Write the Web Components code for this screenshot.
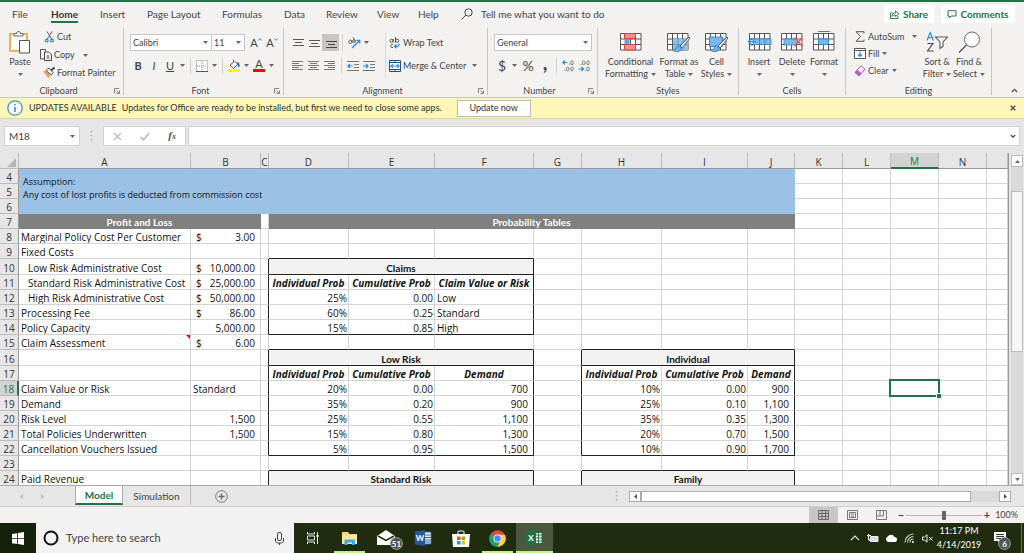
<!DOCTYPE html>
<html lang="en">
<head>
<meta charset="utf-8">
<title>Model - Excel</title>
<style>
html, body { margin: 0; height: 100%; }
body {
  --ui: "Lato", "Open Sans", sans-serif;
  --cell: "Open Sans", "Noto Sans", sans-serif;
  --green: #217346;
  --ink: #444;
  --line: #d4d4d4;
  font: 9px/12px var(--ui);
  color: var(--ink);
  overflow: hidden;
}
</style>
</head>
<body>
<excel-window></excel-window>
<script>
const base = `
*, *::before, *::after { box-sizing: border-box; }
button { appearance: none; border: 0; background: none; margin: 0; padding: 0; font: inherit; color: inherit; white-space: nowrap; cursor: pointer; }
select, input { font: inherit; color: inherit; margin: 0; border-radius: 0; outline: 0; }
a { color: inherit; text-decoration: none; }
`;

function define(name, css, html, setup) {
  const template = document.createElement('template');
  template.innerHTML = `<style>${base}${css}</style>${html}`;
  customElements.define(name, class extends HTMLElement {
    constructor() {
      super();
      this.attachShadow({ mode: 'open' }).append(template.content.cloneNode(true));
    }
    connectedCallback() { if (setup) setup(this, this.shadowRoot); }
  });
}

/* name: [width, height, markup] */
const grid = (x, y, w, h) => `<path fill="#fff" stroke="#555" d="M${x} ${y}h${w}v${h}h-${w}z M${x} ${y + 5.5}h${w}M${x} ${y + 11}h${w}M${x + 5} ${y}v${h}M${x + 10} ${y}v${h}M${x + 15} ${y}v${h}"/>`;
const brush = `<path d="M22 6l-9 9 2 2 8-10z" fill="#fff" stroke="#444" stroke-width=".9"/><path d="M12 14.5c-3 0-3 4-6 5 3 2 8 1.500 8.500-2.500z" fill="#6ab0e4" stroke="#1f6fb2" stroke-width=".7"/>`;
const icons = {
  drop: [5, 3, '<path fill="#666" d="M0 0h5L2.500 3z"/>'],
  search: [12, 12, '<circle cx="7.500" cy="4.500" r="3.700" fill="none" stroke="#444"/><path d="M5 7L.5 11.500" stroke="#444"/>'],
  share: [10, 9, '<path d="M3 3H.5v5.500h7.500V6M2 6.500C2 4 3.500 3 5.500 3V.8L9 3.800 5.500 6.500V5C4 5 3 5.500 2 6.500z" fill="none" stroke="#217346" stroke-width=".9"/>'],
  comment: [10, 9, '<path d="M1 .7h8v5.300H4L2.200 8V6H1z" fill="none" stroke="#217346"/>'],
  paste: [22, 23, '<path d="M1 3h17v17H1z" fill="#fff" stroke="#f0b35c" stroke-width="2"/><path d="M5 5V2.500h2.500a2 2 0 0 1 4 0H14V5z" fill="#fff" stroke="#666"/><path d="M10.500 9.500h10v12.500h-10z" fill="#fff" stroke="#555"/>'],
  cut: [12, 12, '<g transform="translate(2 0)"><path d="M2 .5l5 8M7 .5l-5 8" stroke="#555" fill="none"/><circle cx="1.700" cy="9.500" r="1.400" fill="none" stroke="#2b88d8" stroke-width="1.200"/><circle cx="7" cy="9.500" r="1.400" fill="none" stroke="#2b88d8" stroke-width="1.200"/></g>'],
  copy: [12, 12, '<path d="M4 10H.5V.5h5v2" fill="none" stroke="#555"/><path d="M4.500 3h4l3 2.500v6h-7z" fill="#fff" stroke="#444"/><path d="M6.500 7h3M6.500 9h3" stroke="#444"/>'],
  painter: [12, 12, '<path d="M0 4.500L4 3l4 4-2.500 4.500z" fill="#f5a35c"/><path d="M3 3.500L6 1l4 4.500L8.500 8z" fill="#fff" stroke="#555"/><path d="M8 3.500L11.500.5" stroke="#444" stroke-width="2"/>'],
  launcher: [6, 6, '<path d="M.5 5V.5H5M2.500 2.500L5 5M5.500 2.500v3h-3" fill="none" stroke="#777" stroke-width=".9"/>'],
  borders: [12, 12, '<path d="M.5.5h11v11H.5zM6 1v10M1 6h10" fill="#fff" stroke="#888" stroke-dasharray="1 1"/><path d="M0 11.500h12" stroke="#555"/>'],
  fill: [12, 13, '<path d="M5.500.8v2.500L2 6l3.500 3.500L10 5 6.500 2.500" fill="#fff" stroke="#555"/><path d="M9.500 3.500c1.500 1 1.500 3 1 4.500" stroke="#1f6fb2" stroke-width="1.600" fill="none"/><path d="M0 10h12v3H0z" fill="#ff0"/>'],
  caretup: [4, 3, '<path d="M.3 2.500L2 .7l1.700 1.800" fill="none" stroke="#2b88d8"/>'],
  caretdown: [4, 3, '<path d="M.3.5L2 2.300 3.700.5" fill="none" stroke="#2b88d8"/>'],
  top: [12, 12, '<path d="M1 2.500h11M3 5.500h7M1 8.500h11" stroke="#555"/>'],
  middle: [12, 12, '<path d="M1 3.500h11M3 6.500h7M1 9.500h11" stroke="#555"/>'],
  bottom: [12, 12, '<path d="M1 4.500h11M3 7.500h7M1 10.500h11" stroke="#444"/>'],
  left: [12, 12, '<path d="M0 1.500h11M0 3.500h7M0 5.500h11M0 7.500h7M0 9.500h11" stroke="#777"/>'],
  center: [12, 12, '<path d="M0 1.500h11M2 3.500h7M0 5.500h11M2 7.500h7M0 9.500h11" stroke="#777"/>'],
  right: [12, 12, '<path d="M0 1.500h11M4 3.500h7M0 5.500h11M4 7.500h7M0 9.500h11" stroke="#777"/>'],
  orient: [13, 12, '<path d="M4 11l7.500-7.500M8.500 3.300l3.200 0v3.200" stroke="#2b88d8" stroke-width="1.300" fill="none"/><g fill="none" stroke="#666"><circle cx="2.300" cy="5" r="1.600"/><path d="M2.500 2.500l2 3M5 .3l3 5"/><circle cx="6" cy="4" r="1.300"/></g>'],
  outdent: [12, 12, '<path d="M0 1.500h12M7 4.500h5M7 7.500h5M0 10.500h12" stroke="#777"/><path d="M6 6H1M3 4L1 6l2 2" stroke="#2b88d8" stroke-width="1.200" fill="none"/>'],
  indent: [12, 12, '<path d="M0 1.500h12M7 4.500h5M7 7.500h5M0 10.500h12" stroke="#777"/><path d="M0 6h5M3 4l2 2-2 2" stroke="#2b88d8" stroke-width="1.200" fill="none"/>'],
  wrap: [11, 12, '<g fill="none" stroke="#555"><circle cx="2.500" cy="3.700" r="1.500"/><path d="M4.300 2v3.500M6.500 0v5.500"/><circle cx="8.200" cy="3.700" r="1.600"/><path d="M4 7.500c-3-1-3 4 0 3"/></g><path d="M10 6.500c.5 3-2 3.200-4.500 3M7.500 7.500l-2 2 2 1.800" fill="none" stroke="#2b88d8" stroke-width="1.200"/>'],
  merge: [12, 12, '<path d="M.5.5h11v11H.5z" fill="#fff" stroke="#1f4f80"/><path d="M.5 2.500h11M.5 9.500h11M6 .5v2M6 9.500v2" stroke="#1f4f80"/><path d="M2 6h8M3.800 4.200L2 6l1.800 1.800M8.200 4.200L10 6 8.200 7.800" stroke="#2b88d8" stroke-width="1.200" fill="none"/>'],
  moredec: [12, 12, '<path d="M5.500 2.500H.8M2.800.5l-2 2 2 2" stroke="#2b88d8" fill="none" stroke-width="1.200"/><g fill="none" stroke="#777" stroke-width=".9"><ellipse cx="10" cy="2.800" rx="1.300" ry="2"/><ellipse cx="5.700" cy="9" rx="1.300" ry="2"/><ellipse cx="10" cy="9" rx="1.300" ry="2"/></g><path d="M2.500 10.500h1M7 4.200h1" stroke="#777"/>'],
  lessdec: [12, 12, '<path d="M.5 9h5M3.500 7l2 2-2 2" stroke="#2b88d8" fill="none" stroke-width="1.200"/><g fill="none" stroke="#777" stroke-width=".9"><ellipse cx="5.700" cy="2.800" rx="1.300" ry="2"/><ellipse cx="10" cy="2.800" rx="1.300" ry="2"/><ellipse cx="10" cy="9" rx="1.300" ry="2"/></g><path d="M2.500 4.500h1M7 10.500h1" stroke="#777"/>'],
  conditional: [22, 20, grid(.5, 2.5, 20.5, 16.500) + '<path d="M4.500 2.500h11v5h-11zM4.500 13.500h11V19h-11z" fill="#ff8d8d" stroke="#e04040"/><path d="M4.500 8h5v5h-5z" fill="#57a6e0"/>'],
  fmttable: [24, 22, grid(.5, 2.5, 20.500, 16.500) + '<path d="M6 8h15v11H6z" fill="#8ec3ee"/><path d="M6 13.500h15M11 8v11M16 8v11" stroke="#5a9fd4"/>' + brush],
  cellstyles: [24, 22, grid(.5, 2.5, 20.500, 16.500) + '<path d="M4.500 6h13v9.500h-13z" fill="#79b8ee" stroke="#3f88c5"/>' + brush],
  insert: [25, 20, grid(2.5, 2.5, 20.500, 16.500) + '<path d="M6 8h18v5.500H6z" fill="#7db9ec" stroke="#3b87c8" stroke-width=".8"/><path d="M12.500 8.500v5M18 8.500v5" stroke="#3b87c8"/><path d="M9 10.700H1.500M5.500 6.700l-4 4 4 4" fill="none" stroke="#2b88d8" stroke-width="1.300"/>'],
  delete: [23, 20, grid(.5, 2.5, 20.500, 16.500) + '<path d="M3 8h11l3 3-3 3H3z" fill="#7db9ec" stroke="#3b87c8" stroke-width=".8"/><path d="M13.500 6.500l8 9M21.500 6.500l-8 9" stroke="#f05a50" stroke-width="1.500"/>'],
  format: [22, 20, '<path d="M5 .5h12" stroke="#2b88d8"/>' + grid(.5, 2.5, 20.500, 16.5) + '<path d="M5.500 8h10v5.500h-10z" fill="#79b8ee" stroke="#3b87c8"/>'],
  sum: [12, 11, '<path d="M10 2.500V.7H2L6.500 5.500 2 10.300h8V8.500" fill="none" stroke="#555"/>'],
  filldown: [12, 11, '<path d="M.5.5h11v10H.5z" fill="#fff" stroke="#555"/><path d="M.5 2.500h11" stroke="#555"/><path d="M6 3.500v5M4 6.500l2 2 2-2" stroke="#2b88d8" fill="none" stroke-width="1.200"/>'],
  clear: [12, 12, '<path d="M1 7.500L7 .8l4 3.400-6 6.700z" fill="#fff" stroke="#a54ab3"/><path d="M1 7.500l2.500-2.700 4 3.400L5 11z" fill="#b75fc4"/>'],
  sort: [22, 22, '<g fill="none" stroke-width="1.100"><path d="M1 9.500L4.200 1.500l3.200 8M2.200 6.700h4" stroke="#2b88d8"/><path d="M1.500 12.500h5.500L1.500 20h6" stroke="#444"/><path d="M9.500 6h12l-4.500 5v4.500l-3 2V11z" stroke="#555" fill="#fff"/></g>'],
  find: [23, 22, '<circle cx="14" cy="8.500" r="7.500" fill="#fff" stroke="#666"/><path d="M8.500 14L1 21.500" stroke="#555" stroke-width="1.300"/>'],
  collapse: [7, 5, '<path d="M.8 4L3.500 1.300 6.200 4" fill="none" stroke="#555" stroke-width="1.300"/>'],
  info: [16, 16, '<circle cx="8" cy="8" r="7.200" fill="#fff" stroke="#3b98d0" stroke-width="1.300"/><path d="M8 7v5M8 4v1.500" stroke="#2b88d8" stroke-width="1.500"/>'],
  close: [6, 6, '<path d="M.7.700l4.600 4.600M5.300.700L.7 5.300" stroke="#555" stroke-width="1.500"/>'],
  dots: [3, 10, '<path d="M1.500 0v10" stroke="#aaa" stroke-width="1.500" stroke-dasharray="1.500 2.500"/>'],
  cancel: [9, 9, '<path d="M1 1l7 7M8 1L1 8" stroke="#bbb" stroke-width="1.300"/>'],
  check: [10, 9, '<path d="M1 5l2.500 3L9 1" stroke="#bbb" stroke-width="1.600" fill="none"/>'],
  expand: [6, 5, '<path d="M.8 1L3 3.300 5.200 1" fill="none" stroke="#555" stroke-width="1.300"/>'],
  corner: [9, 9, '<path d="M9 0v9H0z" fill="#b5b5b5"/>'],
  triL: [3, 5, '<path d="M3 0v5L0 2.500z" fill="currentColor"/>'],
  triR: [3, 5, '<path d="M0 0v5l3-2.500z" fill="currentColor"/>'],
  triU: [5, 3, '<path d="M0 3h5L2.500 0z" fill="currentColor"/>'],
  triD: [5, 3, '<path d="M0 0h5L2.500 3z" fill="currentColor"/>'],
  plus: [13, 13, '<circle cx="6.500" cy="6.500" r="5.800" fill="none" stroke="#777"/><path d="M3.500 6.500h6M6.500 3.500v6" stroke="#666" stroke-width="1.300"/>'],
  viewnormal: [11, 10, '<path d="M.5.5h10v9H.5zM.5 3.500h10M.5 6.500h10M4 .5v9M7.500.5v9" fill="none" stroke="#666"/>'],
  viewpage: [11, 10, '<path d="M.5.5h10v9H.5zM2.500 2.500h6v5h-6z" fill="none" stroke="#777"/><path d="M4 4h3M4 6h3" stroke="#777"/>'],
  viewbreak: [11, 10, '<path d="M.5.5h10v9H.5zM4 .5v5.500M7.500.5V6M.5 6H7.500" fill="none" stroke="#777"/>'],
  windows: [12, 13, '<path d="M0 2l5.200-.8v5H0zM6 1l6-1v6.200H6zM0 7h5.200v5L0 11.200zM6 7h6v6l-6-1z" fill="#fff"/>'],
  ring: [16, 16, '<circle cx="8" cy="8" r="6.500" fill="none" stroke="#111" stroke-width="2"/>'],
  mic: [9, 13, '<rect x="2.500" y=".5" width="4" height="8" rx="1.500" fill="none" stroke="#444"/><path d="M.5 6v3.500l2 1.500h4l2-1.500V6M4.500 11v2" fill="none" stroke="#444"/>'],
  taskview: [12, 12, '<path d="M.5 0v2h7V0M.5 12v-2h7v2M.5 4h7v4h-7zM10.500 0v12" fill="none" stroke="#e8e8e8"/><path d="M9.500 4h2" stroke="#fff" stroke-width="2"/>'],
  explorer: [17, 14, '<path d="M1 1h6l1.500 2H16v10H1z" fill="#f7d774"/><path d="M1 4h15v9H1z" fill="#fce79c"/><path d="M3.500 14V8.500h10.500V14h-3v-2.500H6.500V14z" fill="#3fa9e0"/>'],
  mail: [19, 16, '<path d="M0 6l9-6 9 6v9H0z" fill="#fff"/><path d="M1 6l8 4.500L17 6" fill="none" stroke="#1e2a0e" stroke-width="1.500"/>'],
  word: [17, 16, '<path d="M8 2h8v12H8z" fill="#fff" stroke="#2b579a"/><path d="M9 5h6M9 7.500h6M9 10h6M9 12h6" stroke="#2b579a"/><path d="M0 1.500L10 0v16L0 14.500z" fill="#2b579a"/>'],
  store: [18, 17, '<path d="M6 5V1.800C6 .5 12 .5 12 1.800V5" fill="none" stroke="#ddd" stroke-width="1.200"/><path d="M0 4h18l-1 13H1z" fill="#fff"/><path d="M5 6.500h3.500V10H5z" fill="#f25022"/><path d="M9.500 6.500H13V10H9.500z" fill="#7fba00"/><path d="M5 11h3.500v3.500H5z" fill="#00a4ef"/><path d="M9.500 11H13v3.500H9.500z" fill="#ffb900"/>'],
  chrome: [17, 17, '<circle cx="8.500" cy="8.500" r="8.300" fill="#dd4b3e"/><path d="M8.500 8.500L1.300 4.400A8.300 8.300 0 0 0 8.500 16.800l3.500-6.300z" fill="#1da462"/><path d="M8.500 8.500h4l-4 8.300A8.300 8.300 0 0 0 15.900 4.800H8.500z" fill="#ffcd46"/><circle cx="8.500" cy="8.500" r="4" fill="#fff"/><circle cx="8.500" cy="8.500" r="3.200" fill="#4c8bf5"/>'],
  excel: [17, 16, '<path d="M8 2.500h8v11H8z" fill="#fff" stroke="#217346"/><path d="M9 5h7M9 8h7M9 11h7M12.500 3v10" stroke="#217346"/><path d="M0 1.500L10 0v16L0 14.500z" fill="#217346"/>'],
  trayup: [10, 6, '<path d="M1 5l4-4 4 4" fill="none" stroke="#e8e8e8" stroke-width="1.100"/>'],
  battery: [12, 9, '<path d="M3.500 2.500h7.500v5H3.500z" fill="#ddd" stroke="#eee"/><path d="M0 1.500h4M1.500 0v4.500c0 1.500 1 2 2 2" fill="none" stroke="#fff" stroke-width="1.200"/>'],
  cloud: [13, 8, '<path d="M3 8a3 3 0 0 1-.3-5.500A4 4 0 0 1 9.500 3 2.600 2.600 0 0 1 10.500 8z" fill="#fff"/>'],
  wifi: [11, 10, '<path d="M1 9.500A8.500 8.500 0 0 1 9.500 1M3.500 9.500a6 6 0 0 1 6-6M6 9.500A3.500 3.500 0 0 1 9.500 6" fill="none" stroke="#c8cdc0" stroke-width="1.100"/><circle cx="9" cy="9" r="1" fill="#fff"/>'],
  mute: [11, 9, '<path d="M.5 3h2L5 .8v7.400L2.500 6h-2z" fill="none" stroke="#eee"/><path d="M7 3l3.500 3.500M10.500 3L7 6.500" stroke="#eee"/>'],
  notes: [13, 12, '<path d="M0 0h12v9H6l-2 3V9H0z" fill="#fff"/><path d="M2 2.500h8M2 4.500h8M2 6.500h5" stroke="#33402a"/>']
};

customElements.define('ui-icon', class extends HTMLElement {
  connectedCallback() {
    if (this.shadowRoot) return;
    const [w, h, art] = icons[this.getAttribute('name')];
    this.attachShadow({ mode: 'open' }).innerHTML =
      `<style>:host{display:block;flex:none;width:${w}px;height:${h}px}svg{display:block}</style>` +
      `<svg width="${w}" height="${h}" viewBox="0 0 ${w} ${h}" aria-hidden="true">${art}</svg>`;
  }
});

define('ribbon-tabs', `
:host { display: flex; flex: none; align-items: center; height: 26px; padding: 0 9px 0 12px; border-top: 2px solid var(--green); background: #f3f2f1; font-size: 10px; }
nav { display: grid; grid-template-columns: 39px 49px 47px 75px 62px 42px 51px 41px 43px auto; align-items: center; height: 24px; margin-right: auto; white-space: nowrap; }
nav a { justify-self: start; line-height: 14px; border-bottom: 2px solid transparent; padding-top: 2px; }
nav a.on { font-weight: 700; border-color: var(--green); color: #333; }
.tell { display: flex; align-items: center; gap: 8px; }
.act { display: flex; align-items: center; justify-content: center; gap: 3px; width: 50px; height: 18px; background: #fff; border-radius: 2px; color: var(--green); font-weight: 700; }
.act + .act { width: 74px; margin-left: 7px; }
`, `
<nav>
  <a href="#file">File</a><a href="#home" class="on">Home</a><a href="#insert">Insert</a><a href="#layout">Page Layout</a><a href="#formulas">Formulas</a><a href="#data">Data</a><a href="#review">Review</a><a href="#view">View</a><a href="#help">Help</a>
  <button class="tell"><ui-icon name="search"></ui-icon>Tell me what you want to do</button>
</nav>
<button class="act"><ui-icon name="share"></ui-icon>Share</button>
<button class="act"><ui-icon name="comment"></ui-icon>Comments</button>
`);

define('ribbon-group', `
:host { display: flex; flex: none; flex-direction: column; margin: 2px 0; border-right: 1px solid #c6c6c6; box-sizing: border-box; }
.body { display: flex; flex: 1; }
.foot { display: flex; align-items: center; line-height: 8px; height: 8px; padding-right: 3px; }
.foot span { flex: 1; text-align: center; padding-left: 3px; }
button[hidden] { display: none; }
`, `
<div class="body"><slot></slot></div>
<div class="foot"><span></span><button aria-label="More options"><ui-icon name="launcher"></ui-icon></button></div>
`, (host, root) => {
  root.querySelector('span').textContent = host.getAttribute('label');
  root.querySelector('button').hidden = !host.hasAttribute('launcher');
});

define('office-ribbon', `
:host { display: flex; flex: none; height: 72px; background: #f3f2f1; border-bottom: 1px solid #c8c6c4; position: relative; }
.rows { display: flex; flex-direction: column; gap: 6px; padding: 6px 0 0 6px; }
.row { display: flex; align-items: center; height: 17px; }
.sep { width: 1px; height: 16px; margin: 0 3px; background: #d2d0ce; }
.tall { width: 1px; height: 46px; margin: 4px 0 0 8px; background: #dcdad8; }
select { appearance: none; height: 17px; border: 1px solid #c6c6c6; padding: 0 2px; background: #fff url("data:image/svg+xml,%3Csvg xmlns='http://www.w3.org/2000/svg' width='5' height='3'%3E%3Cpath fill='%23666' d='M0 0h5L2.500 3z'/%3E%3C/svg%3E") no-repeat right 3px center; }
select + select { border-left: 0; }
.row button { display: flex; align-items: center; justify-content: center; width: 16px; height: 17px; }
.row .arrow { width: 9px; }
.row .on { width: 17px; background: #c8c6c4; }
.glyph { font-size: 11px; }
.money { font-size: 14px; }
.row .comma { font-size: 20px; padding-bottom: 8px; }
.row .text { width: auto; gap: 2px; justify-content: flex-start; }
.list { display: flex; flex-direction: column; }
.list button { display: flex; align-items: center; height: 18px; }
.list button > ui-icon:first-child { margin-right: 2px; }
.list button > ui-icon:last-child { margin-left: 3px; }
.list .far > ui-icon:last-child { margin-left: 8px; }
.tight button { height: 17px; }
.big { display: flex; flex-direction: column; align-items: center; padding-top: 3px; }
.pic { display: flex; align-items: flex-start; height: 22px; margin-bottom: 3px; }
.big .line { display: flex; align-items: center; justify-content: center; gap: 3px; height: 12px; }
.tools { display: grid; padding-left: 3px; }
.row .colour { flex-direction: column; }
.colour i { display: block; width: 12px; height: 3px; background: #f00; }
.colour span { font-size: 11px; line-height: 10px; }
.fold { position: absolute; right: 6px; bottom: 4px; }
`, `
<ribbon-group label="Clipboard" launcher style="width:124px">
  <button class="big" style="width:40px"><span class="pic"><ui-icon name="paste"></ui-icon></span><span>Paste</span><span class="line"><ui-icon name="drop"></ui-icon></span></button>
  <div class="list">
    <button><ui-icon name="cut"></ui-icon>Cut</button>
    <button class="far"><ui-icon name="copy"></ui-icon>Copy<ui-icon name="drop"></ui-icon></button>
    <button><ui-icon name="painter"></ui-icon>Format Painter</button>
  </div>
</ribbon-group>
<ribbon-group label="Font" launcher style="width:160px">
  <div class="rows">
    <div class="row"><select aria-label="Font" style="width:82px"><option>Calibri</option></select><select aria-label="Size" style="width:33px"><option>11</option></select>
      <button class="glyph" style="margin-left:3px" aria-label="Grow">A<ui-icon name="caretup" style="margin-bottom:6px"></ui-icon></button><button class="glyph" aria-label="Shrink">A<ui-icon name="caretdown" style="margin-bottom:6px"></ui-icon></button></div>
    <div class="row glyph"><button><b>B</b></button><button><i>I</i></button><button><u>U</u></button><button class="arrow" aria-label="Underline styles"><ui-icon name="drop"></ui-icon></button><span class="sep"></span>
      <button aria-label="Borders"><ui-icon name="borders"></ui-icon></button><button class="arrow" aria-label="Border styles"><ui-icon name="drop"></ui-icon></button><span class="sep"></span>
      <button aria-label="Fill"><ui-icon name="fill"></ui-icon></button><button class="arrow" aria-label="Fill colours"><ui-icon name="drop"></ui-icon></button><button class="colour"><span>A</span><i></i></button><button class="arrow" aria-label="Font colours"><ui-icon name="drop"></ui-icon></button></div>
  </div>
</ribbon-group>
<ribbon-group label="Alignment" launcher style="width:204px">
  <div class="rows">
    <div class="row"><button aria-label="Top"><ui-icon name="top"></ui-icon></button><button aria-label="Middle"><ui-icon name="middle"></ui-icon></button><button class="on" aria-label="Bottom"><ui-icon name="bottom"></ui-icon></button><span class="sep"></span>
      <button aria-label="Orientation"><ui-icon name="orient"></ui-icon></button><button class="arrow" aria-label="Orientations"><ui-icon name="drop"></ui-icon></button></div>
    <div class="row"><button aria-label="Left"><ui-icon name="left"></ui-icon></button><button aria-label="Centre"><ui-icon name="center"></ui-icon></button><button aria-label="Right"><ui-icon name="right"></ui-icon></button><span class="sep"></span>
      <button aria-label="Outdent"><ui-icon name="outdent"></ui-icon></button><button aria-label="Indent"><ui-icon name="indent"></ui-icon></button></div>
  </div>
  <span class="tall"></span>
  <div class="rows" style="padding-left:3px">
    <div class="row"><button class="text"><ui-icon name="wrap" style="margin-right:1px"></ui-icon>Wrap Text</button></div>
    <div class="row"><button class="text"><ui-icon name="merge"></ui-icon>Merge &amp; Center</button><button class="arrow" style="margin-left:4px" aria-label="Merge options"><ui-icon name="drop"></ui-icon></button></div>
  </div>
</ribbon-group>
<ribbon-group label="Number" launcher style="width:110px">
  <div class="rows">
    <div class="row"><select aria-label="Number format" style="width:98px"><option>General</option></select></div>
    <div class="row money"><button>$</button><button class="arrow" aria-label="Currencies"><ui-icon name="drop"></ui-icon></button><button style="width:18px">%</button><button class="comma"><b>,</b></button><span class="sep"></span><button aria-label="More decimals"><ui-icon name="moredec"></ui-icon></button><button aria-label="Fewer decimals"><ui-icon name="lessdec"></ui-icon></button></div>
  </div>
</ribbon-group>
<ribbon-group label="Styles" style="width:141px">
  <div class="tools" style="grid-template-columns:59px 38px 37px">
    <button class="big"><span class="pic"><ui-icon name="conditional"></ui-icon></span><span>Conditional</span><span class="line">Formatting<ui-icon name="drop"></ui-icon></span></button>
    <button class="big"><span class="pic"><ui-icon name="fmttable"></ui-icon></span><span>Format as</span><span class="line">Table<ui-icon name="drop"></ui-icon></span></button>
    <button class="big"><span class="pic"><ui-icon name="cellstyles"></ui-icon></span><span>Cell</span><span class="line">Styles<ui-icon name="drop"></ui-icon></span></button>
  </div>
</ribbon-group>
<ribbon-group label="Cells" style="width:107px">
  <div class="tools" style="grid-template-columns:34px 32px 32px">
    <button class="big"><span class="pic"><ui-icon name="insert"></ui-icon></span><span>Insert</span><span class="line"><ui-icon name="drop"></ui-icon></span></button>
    <button class="big"><span class="pic"><ui-icon name="delete"></ui-icon></span><span>Delete</span><span class="line"><ui-icon name="drop"></ui-icon></span></button>
    <button class="big"><span class="pic"><ui-icon name="format"></ui-icon></span><span>Format</span><span class="line"><ui-icon name="drop"></ui-icon></span></button>
  </div>
</ribbon-group>
<ribbon-group label="Editing" style="width:146px">
  <div class="list tight" style="width:75px;padding-left:8px">
    <button class="far"><ui-icon name="sum"></ui-icon>AutoSum<ui-icon name="drop"></ui-icon></button>
    <button><ui-icon name="filldown"></ui-icon>Fill<ui-icon name="drop"></ui-icon></button>
    <button><ui-icon name="clear"></ui-icon>Clear<ui-icon name="drop"></ui-icon></button>
  </div>
  <div class="tools" style="grid-template-columns:32px 32px;padding:0">
    <button class="big"><span class="pic"><ui-icon name="sort"></ui-icon></span><span>Sort &amp;</span><span class="line">Filter<ui-icon name="drop"></ui-icon></span></button>
    <button class="big"><span class="pic"><ui-icon name="find"></ui-icon></span><span>Find &amp;</span><span class="line">Select<ui-icon name="drop"></ui-icon></span></button>
  </div>
</ribbon-group>
<button class="fold" aria-label="Collapse"><ui-icon name="collapse"></ui-icon></button>
`);

define('message-bar', `
:host { display: flex; flex: none; align-items: center; height: 21px; padding: 0 8px 0 7px; background: #fcf7b6; border-bottom: 1px solid #ded9a0; color: #333; white-space: nowrap; }
b { font-weight: 400; margin: 0 5px 0 6px; }
.now { width: 74px; height: 17px; margin: 0 auto 0 15px; background: #fff; border: 1px solid #bbb; }
`, `
<ui-icon name="info"></ui-icon><b>UPDATES AVAILABLE</b><span>Updates for Office are ready to be installed, but first we need to close some apps.</span>
<button class="now">Update now</button><button aria-label="Close"><ui-icon name="close"></ui-icon></button>
`);

define('formula-bar', `
:host { display: flex; flex: none; align-items: center; height: 34px; padding: 0 4px; background: #e6e6e6; }
.name, .edit, .ctl { height: 20px; border: 1px solid #d0d0d0; background: #fff; }
.name { display: flex; align-items: center; width: 76px; padding-right: 4px; }
.name input { flex: 1; min-width: 0; border: 0; padding: 0 4px; font-size: 10px; background: none; }
.dots { width: 23px; display: flex; justify-content: center; }
.ctl { display: flex; align-items: center; justify-content: space-between; width: 83px; padding: 0 9px; }
.ctl button:last-child { font: italic 700 11px/16px "Liberation Serif", serif; color: #555; }
.ctl small { font-size: 8px; }
.edit { display: flex; align-items: center; flex: 1; margin-left: 2px; padding-right: 3px; }
.edit input { flex: 1; border: 0; background: none; }
`, `
<label class="name"><input aria-label="Name box" value="M18"><ui-icon name="drop"></ui-icon></label>
<span class="dots"><ui-icon name="dots"></ui-icon></span>
<div class="ctl"><button aria-label="Cancel"><ui-icon name="cancel"></ui-icon></button><button aria-label="Enter"><ui-icon name="check"></ui-icon></button><button>f<small>x</small></button></div>
<label class="edit"><input aria-label="Formula"><ui-icon name="expand"></ui-icon></label>
`);

/* Sheet contents: address -> [text, classes, colspan, rowspan] */
const cells = {
  A4: ['', 'note', 10, 3],
  A7: ['Profit and Loss', 'band', 2], D7: ['Probability Tables', 'band', 7],
  A8: ['Marginal Policy Cost Per Customer'], B8: ['$ 3.00', 'acct'],
  A9: ['Fixed Costs'],
  A10: ['Low Risk Administrative Cost', 'in'], B10: ['$ 10,000.00', 'acct'],
  A11: ['Standard Risk Administrative Cost', 'in'], B11: ['$ 25,000.00', 'acct'],
  A12: ['High Risk Administrative Cost', 'in'], B12: ['$ 50,000.00', 'acct'],
  A13: ['Processing Fee'], B13: ['$ 86.00', 'acct'],
  A14: ['Policy Capacity'], B14: ['5,000.00', 'num pad'],
  A15: ['Claim Assessment', 'flag'], B15: ['$ 6.00', 'acct'],
  A18: ['Claim Value or Risk'], B18: ['Standard'], A19: ['Demand'],
  A20: ['Risk Level'], B20: ['1,500', 'num pad'],
  A21: ['Total Policies Underwritten'], B21: ['1,500', 'num pad'],
  A22: ['Cancellation Vouchers Issued'], A24: ['Paid Revenue'],
  D10: ['Claims', 'title', 3], D16: ['Low Risk', 'title', 3], D24: ['Standard Risk', 'title', 3],
  H16: ['Individual', 'title', 3], H24: ['Family', 'title', 3],
  M18: ['', 'sel']
};
const put = (cols, row, values, classes) => values.forEach((v, i) => { cells[cols[i] + row] = [v, classes[i]]; });
const head = ['head', 'head', 'head'], nums = ['num', 'num', 'num pad'];
put('DEF', 11, ['Individual Prob', 'Cumulative Prob', 'Claim Value or Risk'], head);
[['25%', '0.00', 'Low'], ['60%', '0.25', 'Standard'], ['15%', '0.85', 'High']].forEach((v, i) => put('DEF', 12 + i, v, ['num', 'num', '']));
put('DEF', 17, ['Individual Prob', 'Cumulative Prob', 'Demand'], head);
[['20%', '0.00', '700'], ['35%', '0.20', '900'], ['25%', '0.55', '1,100'], ['15%', '0.80', '1,300'], ['5%', '0.95', '1,500']].forEach((v, i) => put('DEF', 18 + i, v, nums));
put('HIJ', 17, ['Individual Prob', 'Cumulative Prob', 'Demand'], head);
[['10%', '0.00', '900'], ['25%', '0.10', '1,100'], ['35%', '0.35', '1,300'], ['20%', '0.70', '1,500'], ['10%', '0.90', '1,700']].forEach((v, i) => put('HIJ', 18 + i, v, nums));

/* Outlined ranges: first row, first column, last row, last column */
const boxes = [[10, 4, 10, 6], [11, 4, 14, 6], [16, 4, 16, 6], [17, 4, 22, 6], [24, 4, 25, 6], [16, 8, 16, 10], [17, 8, 22, 10], [24, 8, 25, 10]];
const letters = 'ABCDEFGHIJKLMNO';

define('sheet-grid', `
:host { display: flex; flex: 1; min-height: 0; background: #e6e6e6; font: 10px/12px var(--cell); color: #111; }
.view { flex: 1; min-width: 0; overflow: hidden; border-right: 1px solid #999; background: #fff; }
table { table-layout: fixed; width: 100%; border-collapse: separate; border-spacing: 0; }
th, td { padding: 0 2px; height: 15px; border: 0 solid var(--line); border-width: 0 1px 1px 0; white-space: nowrap; overflow: hidden; text-align: left; line-height: 12px; vertical-align: bottom; }
thead th { height: 16px; background: #e6e6e6; border-right-color: #bbb; border-bottom-color: #999; }
th { font: 10px/12px var(--cell); color: #333; text-align: center; padding: 0; }
tbody th { background: #e6e6e6; border-right-color: #999; border-bottom-color: #bbb; }
tr.mid > * { height: 16px; }
thead .corner ui-icon { margin: 0 0 1px 7px; }
thead .corner { border-bottom-color: #bbb; }
thead .hot { background: #d2d2d2; color: var(--green); border-bottom: 2px solid var(--green); }
tbody .hot { background: #d2d2d2; color: var(--green); border-right: 2px solid var(--green); }
td.note { background: #9bc2e6; border-color: #9bc2e6; vertical-align: top; padding: 6px 4px; font-size: 9px; line-height: 13px; }
td.band, td.title { font-family: var(--ui); font-weight: 700; text-align: center; }
td.band { background: #808080; border-color: #808080; color: #fff; }
td.title { background: #f2f2f2; }
td.head { font-weight: 700; font-style: italic; text-align: center; padding: 0; }
td.num { text-align: right; padding: 0 1px; }
td.pad { padding-right: 5px; }
td.in { padding-left: 9px; }
td.acct div { display: flex; justify-content: space-between; padding: 0 3px; }
td.flag { position: relative; }
td.flag::after { content: ""; position: absolute; right: 0; top: 0; border: 2px solid #e00; border-left-color: transparent; border-bottom-color: transparent; }
td.rb { border-right-color: #222; }
td.bb { border-bottom-color: #222; }
td.sel { position: relative; overflow: visible; }
td.sel::before { content: ""; position: absolute; inset: -2px; border: 2px solid var(--green); }
td.sel::after { content: ""; position: absolute; right: -3px; bottom: -3px; width: 5px; height: 5px; background: var(--green); border: 1px solid #fff; border-width: 1px 0 0 1px; }
.bar { display: flex; flex-direction: column; width: 15px; padding: 2px 1px 0 2px; }
.bar button { display: flex; align-items: center; justify-content: center; height: 12px; background: #fff; border: 1px solid #bbb; color: #666; }
.track { flex: 1; background: #dadada; padding: 24px 0 121px; }
.thumb { height: 100%; background: #f6f6f6; border: 1px solid #bbb; }
`, `
<div class="view"><table><colgroup></colgroup><thead><tr></tr></thead><tbody></tbody></table></div>
<div class="bar"><button aria-label="Up"><ui-icon name="triU"></ui-icon></button><div class="track"><div class="thumb"></div></div><button aria-label="Down"><ui-icon name="triD"></ui-icon></button></div>
`, (host, root) => {
  const widths = [19, 172, 70, 8, 80, 86, 99, 48, 80, 86, 47, 48, 48, 48, 48, 0];
  root.querySelector('colgroup').innerHTML = widths.map(w => w ? `<col style="width:${w}px">` : '<col>').join('');
  root.querySelector('thead tr').innerHTML = '<th class="corner"><ui-icon name="corner"></ui-icon></th>' +
    [...letters].map(l => `<th class="${l === 'M' ? 'hot' : ''}">${l === 'O' ? '' : l}</th>`).join('');
  let html = '';
  for (let r = 4; r <= 24; r++) {
    html += `<tr class="${r === 10 || r === 16 ? 'mid' : ''}"><th class="${r === 18 ? 'hot' : ''}">${r}</th>`;
    for (let c = 1; c <= 15; c++) {
      if (r > 4 && r < 7 && c <= 10) continue;
      const [text, cls = '', span = 1, rows = 1] = cells[letters[c - 1] + r] || [''];
      const last = c + span - 1;
      const rb = boxes.some(([a, b, x, y]) => r >= a && r <= x && (last === b - 1 || last === y));
      const bb = boxes.some(([a, b, x, y]) => c >= b && c <= y && (r === a - 1 || r === x));
      let body = text;
      if (cls === 'acct') body = '<div>' + text.split(' ').map(t => `<span>${t}</span>`).join('') + '</div>';
      if (cls === 'note') body = 'Assumption:<br>Any cost of lost profits is deducted from commission cost';
      html += `<td class="${cls}${rb ? ' rb' : ''}${bb ? ' bb' : ''}" colspan="${span}" rowspan="${rows}">${body}</td>`;
      c = last;
    }
    html += '</tr>';
  }
  root.querySelector('tbody').innerHTML = html;
});

define('sheet-tabs', `
:host { display: flex; flex: none; height: 22px; border-top: 1px solid #ababab; border-bottom: 1px solid #cfcfcf; background: #e6e6e6; font-size: 10px; padding-right: 13px; }
.nav { display: flex; align-items: center; gap: 18px; width: 75px; padding-left: 20px; color: #bbb; }
.tab { display: flex; align-items: center; justify-content: center; height: 19px; }
.on { width: 48px; background: #fff; color: var(--green); font-weight: 700; border: 1px solid #ababab; border-width: 0 1px; border-bottom: 2px solid var(--green); }
.off { width: 68px; border-right: 1px solid #bbb; }
.add { margin: 0 0 0 24px; }
.scroll { display: flex; align-items: center; width: 396px; margin-left: auto; }
.scroll button { display: flex; align-items: center; justify-content: center; width: 12px; height: 11px; background: #fff; border: 1px solid #ababab; color: #555; }
.scroll .track { flex: 1; height: 11px; margin: 0; background: #dadada; }
.scroll .thumb { height: 11px; margin-right: 28px; background: #fff; border: 1px solid #ababab; }
.grip { margin-right: 11px; }
`, `
<div class="nav"><ui-icon name="triL"></ui-icon><ui-icon name="triR"></ui-icon></div>
<button class="tab on">Model</button><button class="tab off">Simulation</button>
<button class="add" aria-label="New sheet"><ui-icon name="plus"></ui-icon></button>
<div class="scroll"><ui-icon class="grip" name="dots"></ui-icon><button aria-label="Scroll left"><ui-icon name="triL"></ui-icon></button><div class="track"><div class="thumb"></div></div><button aria-label="Scroll right"><ui-icon name="triR"></ui-icon></button></div>
`);

define('status-bar', `
:host { display: flex; flex: none; align-items: center; justify-content: flex-end; height: 16px; padding-right: 6px; background: #f3f2f1; }
.view { display: flex; align-items: center; justify-content: center; width: 29px; height: 16px; }
.on { background: #c8c6c4; }
.step { width: 10px; font-size: 11px; font-weight: 700; }
input { appearance: none; width: 76px; height: 9px; background: linear-gradient(#b5b5b5, #b5b5b5) no-repeat center / 100% 1px; }
input::-webkit-slider-thumb { appearance: none; width: 4px; height: 9px; background: #666; }
output { width: 26px; text-align: right; }
`, `
<button class="view on" aria-label="Normal"><ui-icon name="viewnormal"></ui-icon></button><button class="view" aria-label="Page layout"><ui-icon name="viewpage"></ui-icon></button><button class="view" aria-label="Page break"><ui-icon name="viewbreak"></ui-icon></button>
<button class="step">−</button><input type="range" aria-label="Zoom" value="50"><button class="step">+</button><output>100%</output>
`);

define('task-bar', `
:host { display: flex; flex: none; align-items: stretch; height: 30px; background: linear-gradient(90deg, #14200a, #202c10 30%, #1f2c0e); color: #fff; }
.start { width: 36px; }
.start, .app, .tray button { display: flex; align-items: center; justify-content: center; }
label { display: flex; align-items: center; width: 258px; padding: 0 10px 0 7px; background: #f2f2f2; color: #444; gap: 7px; }
label input { flex: 1; min-width: 0; border: 0; padding: 0; background: none; font-size: 11px; }
label input::placeholder { color: #444; opacity: 1; }
.app { position: relative; width: 37px; border-bottom: 2px solid transparent; padding-top: 2px; }
.run::after { content: ""; position: absolute; left: 3px; right: 3px; bottom: -2px; height: 2px; background: #c3f08a; }
.active { background: #4c583e; }
.active::after { left: 0; right: 0; }
.badge { position: absolute; display: flex; align-items: center; justify-content: center; width: 13px; height: 13px; border-radius: 7px; background: #555; border: 1px solid #999; font-size: 8px; font-weight: 700; line-height: 10px; color: #fff; }
.app .badge { left: 22px; top: 14px; }
.mark { position: absolute; left: 10px; width: 10px; text-align: center; font-size: 8px; font-weight: 700; }
.tray { display: flex; align-items: center; margin-left: auto; padding-right: 2px; }
.tray button { width: 18px; height: 30px; }
.tray .clock { display: block; width: 46px; line-height: 14px; }
.tray .bell { position: relative; width: 36px; }
.bell .badge { left: 16px; top: 14px; }
.desk { border-right: 1px solid #667058; height: 30px; width: 4px; }
`, `
<button class="start" aria-label="Start"><ui-icon name="windows"></ui-icon></button>
<label><ui-icon name="ring"></ui-icon><input aria-label="Search" placeholder="Type here to search"><ui-icon name="mic"></ui-icon></label>
<button class="app" aria-label="Task view"><ui-icon name="taskview"></ui-icon></button>
<button class="app run" aria-label="Files"><ui-icon name="explorer"></ui-icon></button>
<button class="app"><ui-icon name="mail"></ui-icon><span class="badge">51</span></button>
<button class="app"><ui-icon name="word"></ui-icon><span class="mark">W</span></button>
<button class="app" aria-label="Store"><ui-icon name="store"></ui-icon></button>
<button class="app run" aria-label="Browser"><ui-icon name="chrome"></ui-icon></button>
<button class="app run active"><ui-icon name="excel"></ui-icon><span class="mark">X</span></button>
<div class="tray">
  <button aria-label="Hidden icons"><ui-icon name="trayup"></ui-icon></button><button aria-label="Battery"><ui-icon name="battery"></ui-icon></button><button aria-label="Cloud"><ui-icon name="cloud"></ui-icon></button><button aria-label="Network"><ui-icon name="wifi"></ui-icon></button><button aria-label="Volume"><ui-icon name="mute"></ui-icon></button>
  <button class="clock">11:17 PM<br>4/14/2019</button>
  <button class="bell"><ui-icon name="notes"></ui-icon><span class="badge">6</span></button>
  <span class="desk"></span>
</div>
`);

define('excel-window', `
:host { display: flex; flex-direction: column; height: 100vh; background: #e6e6e6; }
`, `
<ribbon-tabs></ribbon-tabs>
<office-ribbon></office-ribbon>
<message-bar></message-bar>
<formula-bar></formula-bar>
<sheet-grid></sheet-grid>
<sheet-tabs></sheet-tabs>
<status-bar></status-bar>
<task-bar></task-bar>
`);
</script>
</body>
</html>
